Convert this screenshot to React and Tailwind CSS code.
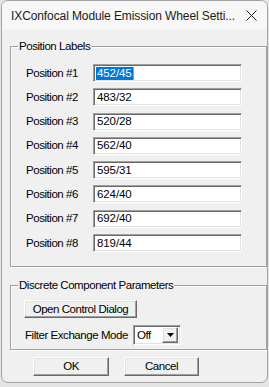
import React from "react";

const positions = [
  { label: "Position #1", value: "452/45", selected: true },
  { label: "Position #2", value: "483/32" },
  { label: "Position #3", value: "520/28" },
  { label: "Position #4", value: "562/40" },
  { label: "Position #5", value: "595/31" },
  { label: "Position #6", value: "624/40" },
  { label: "Position #7", value: "692/40" },
  { label: "Position #8", value: "819/44" },
];

const sunken =
  "border border-t-[#a0a0a0] border-l-[#a0a0a0] border-b-[#ffffff] border-r-[#ffffff] shadow-[inset_1px_1px_0_#696969,inset_-1px_-1px_0_#e3e3e3] bg-white";
const raised =
  "border border-t-[#ffffff] border-l-[#ffffff] border-b-[#696969] border-r-[#696969] shadow-[inset_-1px_-1px_0_#a0a0a0,inset_1px_1px_0_#e3e3e3] bg-[#f0f0f0]";
const group =
  "border border-[#a0a0a0] shadow-[inset_1px_1px_0_#fff,1px_1px_0_#fff]";

function Field({ value, selected }) {
  return (
    <div className={`${sunken} w-[149px] h-[18px] flex items-center pl-[2px] text-[11.5px] tracking-[-0.1px]`}>
      {selected ? (
        <span className="flex items-center">
          <span className="bg-[#0078d7] text-white px-[1px] leading-[13px]">{value}</span>
          <span className="w-[1px] h-[13px] bg-[#f08a24]"></span>
        </span>
      ) : (
        <span className="px-[1px] leading-[13px]">{value}</span>
      )}
    </div>
  );
}

export default function App() {
  return (
    <div
      className="w-[269px] h-[387px] bg-[#e4e4e4] overflow-hidden text-black text-[11.5px]"
      style={{ fontFamily: '"Liberation Sans", Arial, sans-serif' }}
    >
      <div className="ml-[1px] w-[267px] h-[383px] rounded-[7px] border border-[#a3a3a3] bg-[#f0f0f0] overflow-hidden flex flex-col">
        {/* Title bar */}
        <div className="h-[29px] bg-[#f7f7f7] flex items-center justify-between pl-[9px] pr-[9px] shrink-0">
          <span className="text-[12px] text-[#1b1b1b] tracking-[-0.1px]">
            IXConfocal Module Emission Wheel Setti...
          </span>
          <svg width="11" height="11" viewBox="0 0 11 11" className="mr-[1px]">
            <path d="M0.5 0.5 L10.5 10.5 M10.5 0.5 L0.5 10.5" stroke="#1b1b1b" strokeWidth="1" />
          </svg>
        </div>

        <div className="flex flex-col pl-[8px] pt-[10px] tracking-[-0.45px]">
          {/* Position Labels */}
          <fieldset className={`${group} pl-[15px] pr-[22px] pt-[11px] pb-[14px]`}>
            <legend className="-ml-[8px] px-[1px] leading-[13px]">Position Labels</legend>
            <div className="flex flex-col gap-[6.3px]">
              {positions.map((p) => (
                <div key={p.label} className="flex items-center">
                  <span className="w-[67px] leading-[13px]">{p.label}</span>
                  <Field value={p.value} selected={p.selected} />
                </div>
              ))}
            </div>
          </fieldset>

          {/* Discrete Component Parameters */}
          <fieldset className={`${group} mt-[12px] pl-[13px] pt-[8px] pb-[4px]`}>
            <legend className="-ml-[6px] px-[1px] leading-[13px]">Discrete Component Parameters</legend>
            <div className="flex flex-col gap-[7px]">
              <button className={`${raised} w-[113px] h-[18px] flex items-center justify-center leading-[13px]`}>
                Open Control Dialog
              </button>
              <div className="flex items-center">
                <span className="ml-[1px] w-[108px] leading-[13px]">Filter Exchange Mode</span>
                <div className={`${sunken} w-[48px] h-[20px] flex items-center justify-between pl-[3px] pr-[2px]`}>
                  <span className="leading-[13px]">Off</span>
                  <div className={`${raised} w-[16px] h-[16px] flex items-center justify-center`}>
                    <svg width="7" height="4" viewBox="0 0 7 4">
                      <path d="M0 0 H7 L3.5 4 Z" fill="#000" />
                    </svg>
                  </div>
                </div>
              </div>
            </div>
          </fieldset>

          {/* Dialog buttons */}
          <div className="flex gap-[15px] mt-[7px] ml-[23px]">
            <button className={`${raised} w-[76px] h-[19px] flex items-center justify-center leading-[13px]`}>
              OK
            </button>
            <button className={`${raised} w-[75px] h-[19px] flex items-center justify-center leading-[13px]`}>
              Cancel
            </button>
          </div>
        </div>
      </div>
    </div>
  );
}
